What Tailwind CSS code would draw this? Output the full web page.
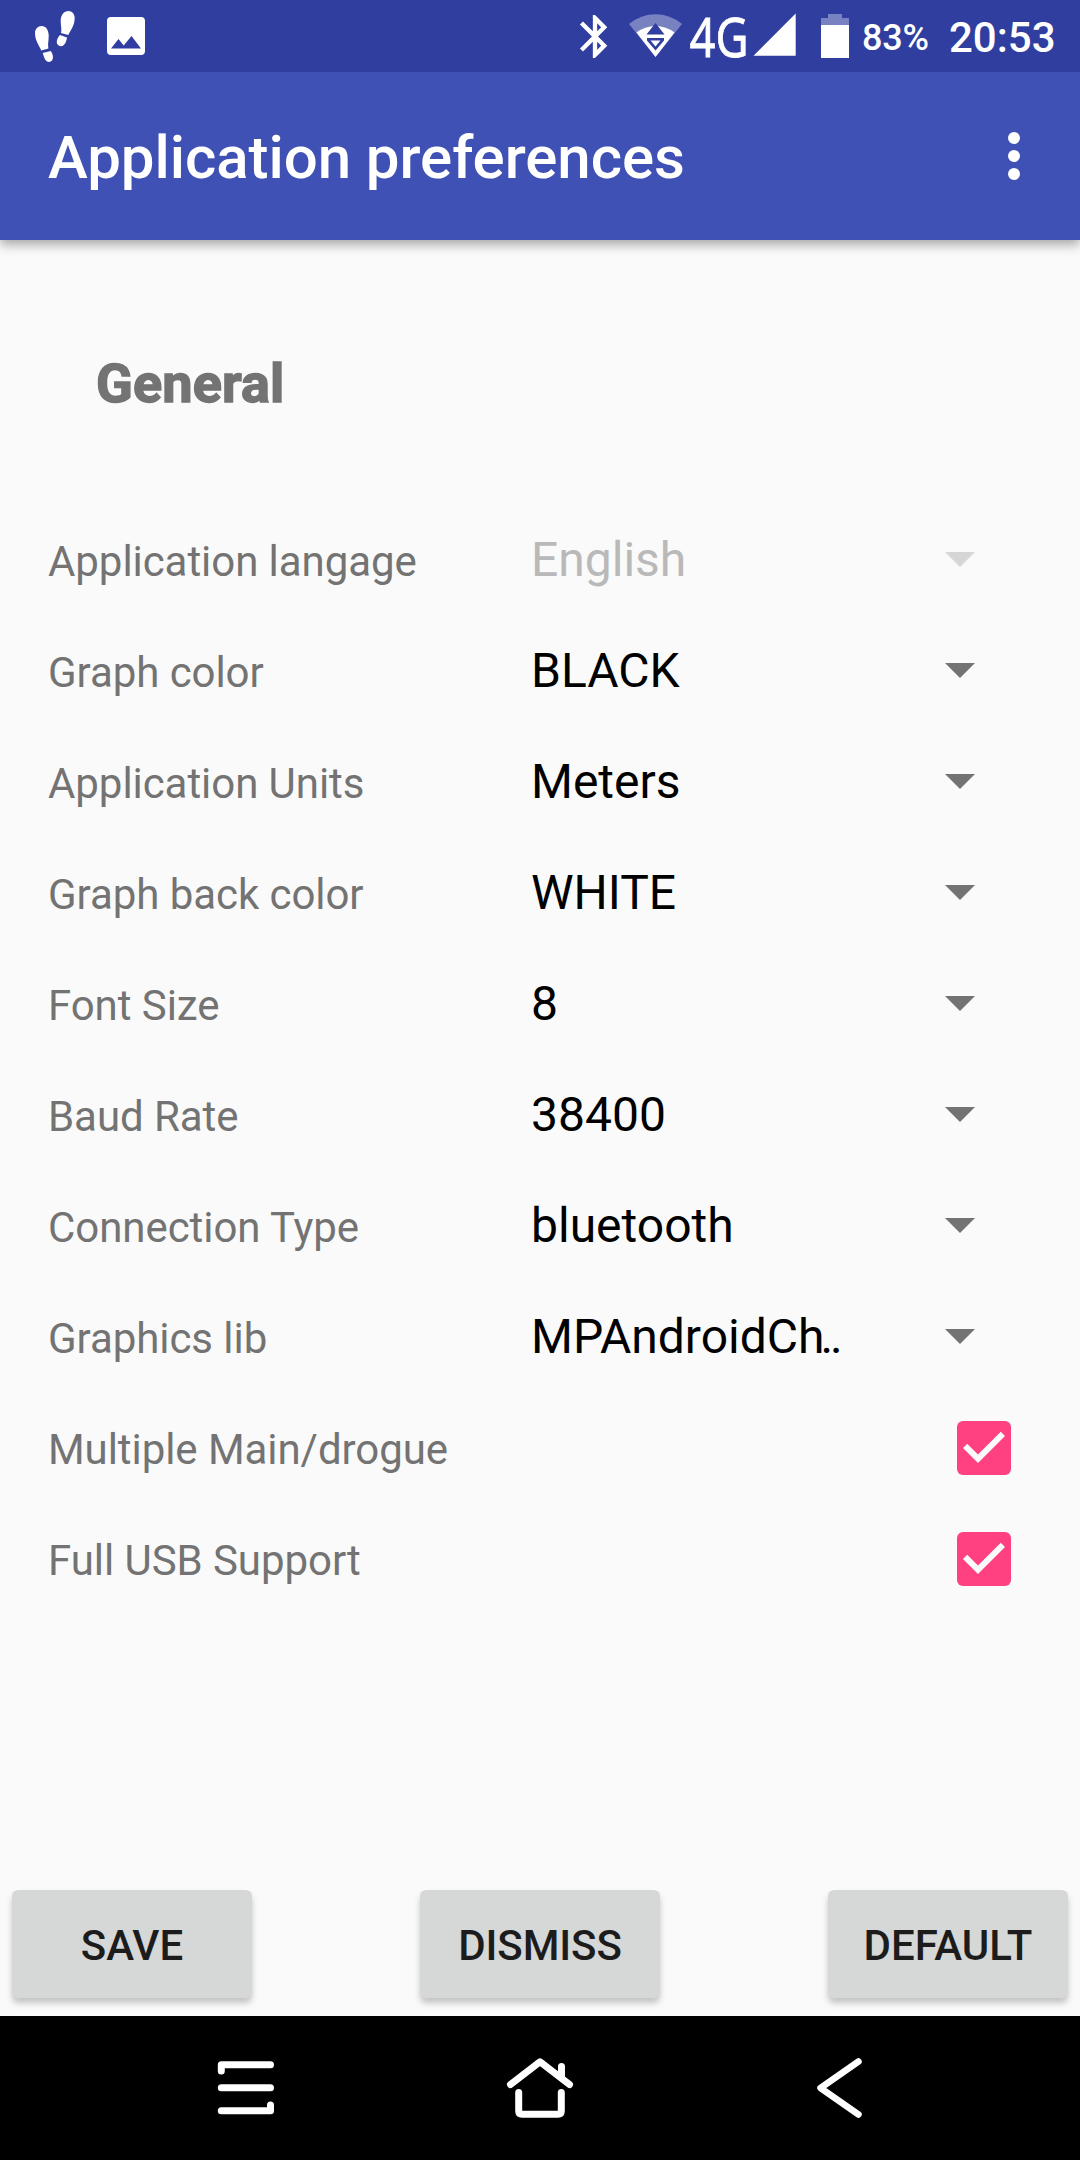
<!DOCTYPE html>
<html lang="en">
<head>
<meta charset="utf-8">
<title>Application preferences</title>
<script src="https://cdn.jsdelivr.net/npm/@tailwindcss/browser@4"></script>
</head>
<body class="bg-[#fafafa]">
<div class="w-[1080px] h-[2160px] flex flex-col overflow-hidden bg-[#fafafa] font-['Roboto',sans-serif]">
  <header class="shrink-0 shadow-[0_5px_10px_rgba(0,0,0,0.32)]">
    <div class="h-[72px] bg-[#303f9f] flex text-white">
      <svg class="w-[160px] h-[72px]" viewBox="0 0 160 72" fill="#fff">
        <path d="M35 33C35 29 38 26 41.500 26C46 26 48.700 30 48.700 36C48.700 41 47.600 44 48.400 48.500L41.300 50.500C39.500 46 35 41 35 33Z"/>
        <path d="M42.700 53L50.800 51C53 54 53.800 58 52 60.500C50.500 62.500 47 62.500 45.500 60C44 57.800 43.500 55.500 42.700 53Z"/>
        <path d="M74.700 18C74.700 14 72 11 68.500 11C64 11 60.700 15 60.700 21C60.700 26 62 29 61 33L68.300 35C70 31 74.700 26 74.700 18Z"/>
        <path d="M60 35L67 37.500C66.500 41 65.500 43.500 63.500 45.300C61.500 47 58 46 57 43.500C56.200 41 57.500 37.500 60 35Z"/>
        <path fill-rule="evenodd" d="M111 17H141Q145 17 145 21V51Q145 55 141 55H111Q107 55 107 51V21Q107 17 111 17ZM111 48.500H141L131.500 36L123.700 45.500L118.500 39Z"/>
      </svg>
      <div class="flex-1"></div>
      <svg class="w-[296px] h-[72px] overflow-visible" viewBox="560 0 296 72" fill="#fff">
        <path transform="translate(569.2 10.700) scale(2.150)" d="M17.710 7.710L12 2h-1v7.590L6.410 5 5 6.410 10.590 12 5 17.590 6.410 19 11 14.410V22h1l5.710-5.710-4.300-4.290 4.300-4.290zM13 5.830l1.880 1.880L13 9.590V5.830zm1.880 10.460L13 18.170v-3.760l1.880 1.880z"/>
        <path fill-opacity=".35" d="M655.500 57L629 24Q641 14.300 655.500 14.300T682 24Z"/>
        <path d="M655.500 57L636.500 32.500Q645 26 655.500 26T674.500 32.500Z"/>
        <path fill="#303f9f" d="M655.500 23L664.500 34.500H646.500ZM647 38H664V40.500L655.500 50.500L647 40.500Z"/>
        <path d="M650.500 40.500H660.500L655.500 46.500Z"/>
        <text x="689.5" y="57" font-family="Noto Sans" font-size="55" textLength="59" lengthAdjust="spacingAndGlyphs" stroke="#fff" stroke-width="0.8">4G</text>
        <path d="M753.500 55.800L795.700 13.500V55.800Z"/>
        <path fill-opacity=".35" d="M828 14H842V18H849V25H821V18H828Z"/>
        <path d="M821 25H849V58H821Z"/>
      </svg>
      <div class="w-[93px] pt-[17px] pl-[6px] text-[36px] leading-[42px] font-medium tracking-[-0.2px]">83%</div>
      <div class="w-[131px] h-[72px] leading-[75px] text-[42px] font-medium">20:53</div>
    </div>
    <div class="h-[168px] bg-[#3f51b5] flex items-center justify-between pl-12 pr-[60px]">
      <h1 class="text-[60px] leading-[70px] font-medium text-white pt-[4px] tracking-[-0.06px]">Application preferences</h1>
      <div class="flex flex-col gap-[6px]">
        <i class="size-3 rounded-full bg-white"></i><i class="size-3 rounded-full bg-white"></i><i class="size-3 rounded-full bg-white"></i>
      </div>
    </div>
  </header>

  <h2 class="h-[264px] shrink-0 pt-[112px] pl-24 text-[54px] leading-[64px] font-bold text-[#737373] tracking-[0.15px] [-webkit-text-stroke:1.4px_#737373]">General</h2>

  <main id="rows" class="flex flex-col"></main>

  <div class="flex-1"></div>
  <div class="flex justify-between px-3 pb-[18px]">
    <button class="w-[240px] h-[108px] rounded-[6px] bg-[#d6d7d7] pt-[3px] text-[42px] font-medium text-[#1c1c1c] shadow-[0_5px_6px_rgba(0,0,0,0.22)]">SAVE</button>
    <button class="w-[240px] h-[108px] rounded-[6px] bg-[#d6d7d7] pt-[3px] text-[42px] font-medium text-[#1c1c1c] tracking-[-0.1px] shadow-[0_5px_6px_rgba(0,0,0,0.22)]">DISMISS</button>
    <button class="w-[240px] h-[108px] rounded-[6px] bg-[#d6d7d7] pt-[3px] text-[42px] font-medium text-[#1c1c1c] shadow-[0_5px_6px_rgba(0,0,0,0.22)]">DEFAULT</button>
  </div>
  <nav class="h-[144px] shrink-0 bg-black">
    <svg class="w-[1080px] h-[144px]" viewBox="0 2016 1080 144" fill="none" stroke="#fff" stroke-width="7" stroke-linecap="round" stroke-linejoin="round">
      <path d="M221.300 2071V2064.800H270.500M221.300 2087.800H270.500M221.300 2110.800H270.500V2105"/>
      <path d="M510.500 2084.500L540 2061.800L569.500 2084.500M561.500 2066.500V2077M518.700 2092.500V2111Q518.700 2114.300 522 2114.300H558Q561.300 2114.300 561.300 2111V2092.500"/>
      <path d="M858.500 2061.500L820.500 2088L858.500 2114.500" stroke-width="6.500"/>
    </svg>
  </nav>
</div>
<script>
  const rows = [
    ['Application langage', 'English', true], ['Graph color', 'BLACK'], ['Application Units', 'Meters'],
    ['Graph back color', 'WHITE'], ['Font Size', '8'], ['Baud Rate', '38400'],
    ['Connection Type', 'bluetooth'], ['Graphics lib', 'MPAndroidCh<span class="-ml-[4px] tracking-[-3px]">..</span>'],
    ['Multiple Main/drogue'], ['Full USB Support']
  ];
  document.getElementById('rows').innerHTML = rows.map(([label, value, off]) => `
    <div class="h-[111px] flex items-center pl-12">
      <span class="w-[483px] pt-1 text-[42px] leading-[50px] tracking-[-0.06px] text-[#737373]">${label}</span>
      ${value ? `
      <span class="w-[414px] text-[48px] leading-[56px] ${off ? 'text-[#b9b9b9]' : 'text-black'}">${value}</span>
      <svg class="w-[30px] h-[15px] ${off ? 'text-[#d6d6d6]' : 'text-[#737373]'}" viewBox="0 0 30 15" fill="currentColor"><path d="M0 0H30L15 15Z"/></svg>` : `
      <span class="ml-[426px] size-[54px] rounded-[6px] bg-[#ff4081]"><svg class="size-[54px]" viewBox="3 3 18 18" fill="#fafafa"><path d="M10 17l-5-5 1.410-1.410L10 14.170l7.590-7.590L19 8z"/></svg></span>`}
    </div>`).join('');
</script>
</body>
</html>
